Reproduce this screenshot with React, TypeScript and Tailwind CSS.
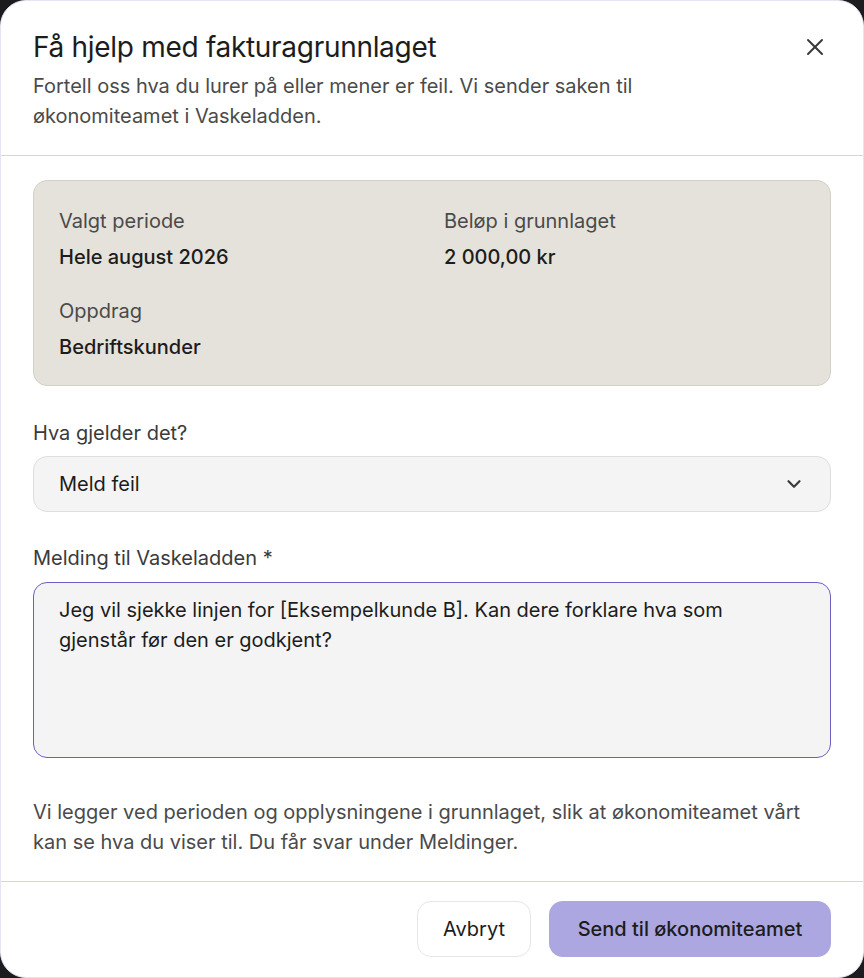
import React from 'react';
import { X, ChevronDown } from 'lucide-react';

const summary = [
  { label: 'Valgt periode', value: 'Hele august 2026' },
  { label: 'Beløp i grunnlaget', value: '2 000,00 kr' },
  { label: 'Oppdrag', value: 'Bedriftskunder' },
];

const App: React.FC = () => {
  return (
    <div className="min-h-screen bg-[#1c1c1e] font-['Inter','Liberation_Sans',sans-serif] text-[#1c1c1c]">
      <div className="flex h-[978px] flex-col overflow-hidden rounded-[26px] border border-[#e6e4f4] bg-white">
        {/* Header */}
        <div className="flex items-start justify-between border-b border-[#d9d6cf] px-8 pt-[28px] pb-[24px]">
          <div>
            <h2 className="text-[28px] leading-[36px] font-normal tracking-[-0.3px] text-[#1c1c1c]">Få hjelp med fakturagrunnlaget</h2>
            <p className="mt-[6px] max-w-[700px] text-[20px] leading-[30px] text-[#4a4a4a]">
              Fortell oss hva du lurer på eller mener er feil. Vi sender saken til økonomiteamet i Vaskeladden.
            </p>
          </div>
          <button className="mt-[4px] mr-[2px] text-[#3a3a3a]">
            <X size={28} strokeWidth={1.7} />
          </button>
        </div>

        {/* Body */}
        <div className="flex-1 px-8 pt-6">
          <div className="grid grid-cols-2 gap-x-6 gap-y-[26px] rounded-[14px] border border-[#d4d0c6] bg-[#e5e2db] px-[25px] pt-[26px] pb-[24px]">
            {summary.map(item => (
              <div key={item.label}>
                <p className="text-[20px] leading-[28px] text-[#4a4a4a]">{item.label}</p>
                <p className="mt-[8px] text-[20px] leading-[28px] font-medium text-[#1c1c1c]">{item.value}</p>
              </div>
            ))}
          </div>

          <label className="mt-[33px] block text-[20px] leading-[28px] text-[#3a3a3a]">Hva gjelder det?</label>
          <div className="mt-[9px] flex h-[56px] items-center justify-between rounded-[14px] border border-[#dedede] bg-[#f4f4f4] pr-[25px] pl-[25px]">
            <span className="text-[20px] text-[#1c1c1c]">Meld feil</span>
            <ChevronDown size={22} strokeWidth={2.4} className="text-[#3a3a3a]" />
          </div>

          <label className="mt-[32px] block text-[20px] leading-[28px] text-[#3a3a3a]">Melding til Vaskeladden *</label>
          <textarea
            readOnly
            defaultValue="Jeg vil sjekke linjen for [Eksempelkunde B]. Kan dere forklare hva som gjenstår før den er godkjent?"
            className="mt-[10px] block h-[176px] w-full resize-none rounded-[14px] border border-[#6a5fc4] bg-[#f4f4f4] pt-[12px] pr-[32px] pl-[25px] text-[20px] leading-[30px] text-[#1c1c1c] outline-none"
          />

          <p className="mt-[39px] text-[20px] leading-[30px] text-[#4a4a4a]">
            Vi legger ved perioden og opplysningene i grunnlaget, slik at økonomiteamet vårt kan se hva du viser til. Du får svar under Meldinger.
          </p>
        </div>

        {/* Footer */}
        <div className="flex justify-end gap-[18px] border-t border-[#d9d6cf] px-8 pt-[19px] pb-[20px]">
          <button className="h-[56px] w-[114px] rounded-[14px] border border-[#e6e6e6] bg-white text-[20px] text-[#1c1c1c]">Avbryt</button>
          <button className="h-[56px] w-[282px] rounded-[14px] bg-[#aca7e0] text-[20px] font-medium text-[#1c1c1c]">Send til økonomiteamet</button>
        </div>
      </div>
    </div>
  );
};

export default App;
